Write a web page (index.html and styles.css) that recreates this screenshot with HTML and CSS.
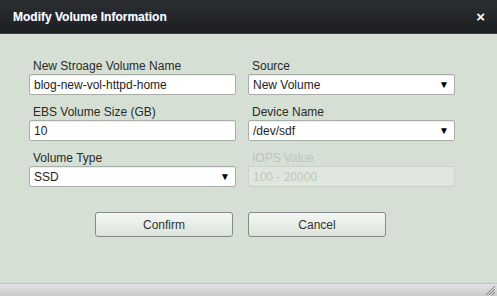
FILE: index.html
```html
<!DOCTYPE html>
<html>

<head>
  <title>Modify Volume Information</title>

  <link rel="stylesheet" href="styles.css">
</head>

<body>
  <div class="dialog">
    <div class="dialog-title">
      <h2>Modify Volume Information</h2>
      <span class="close-btn">&times;</span>
    </div>

    <div class="dialog-body">
      <div class="form-grid">
        <div class="field">
          <label for="volumeName">New Stroage Volume Name</label>
          <input type="text" id="volumeName" value="blog-new-vol-httpd-home" />
        </div>

        <div class="field">
          <label for="source">Source</label>
          <div class="select-box" id="source">
            <span>New Volume</span>
            <span class="arrow">&#9660;</span>
          </div>
        </div>

        <div class="field">
          <label for="volumeSize">EBS Volume Size (GB)</label>
          <input type="text" id="volumeSize" value="10" />
        </div>

        <div class="field">
          <label for="deviceName">Device Name</label>
          <div class="select-box" id="deviceName">
            <span>/dev/sdf</span>
            <span class="arrow">&#9660;</span>
          </div>
        </div>

        <div class="field">
          <label for="volumeType">Volume Type</label>
          <div class="select-box" id="volumeType">
            <span>SSD</span>
            <span class="arrow">&#9660;</span>
          </div>
        </div>

        <div class="field field--disabled">
          <label for="iops">IOPS Value</label>
          <input type="text" id="iops" placeholder="100 - 20000" disabled />
        </div>
      </div>

      <div class="button-row">
        <button class="btn">Confirm</button>
        <button class="btn">Cancel</button>
      </div>
    </div>

    <div class="dialog-footer">
      <!-- resize grip -->
      <svg class="grip" width="12" height="12" viewBox="0 0 12 12">
        <path d="M11 2 L2 11 M11 5 L5 11 M11 8 L8 11" stroke="#7a7a7a" stroke-width="1" fill="none" />
      </svg>
    </div>
  </div>
</body>

</html>
```

FILE: styles.css
```css
* {
  margin: 0;
  padding: 0;
  box-sizing: border-box;
}

body {
  font-family: 'Liberation Sans', Arial, sans-serif;
  font-size: 12px;
  color: #333;
  background-color: #d5dfd4;
}

.dialog {
  display: flex;
  flex-direction: column;
  width: 497px;
  height: 296px;
}

.dialog-title {
  display: flex;
  justify-content: space-between;
  align-items: center;
  height: 34px;
  padding: 0 13px;
  background: linear-gradient(#2b2e31, #1d1f21);
  border-bottom: 1px solid #3d4043;
  color: #fff;
}

.dialog-title h2 {
  font-size: 12px;
  font-weight: bold;
  text-shadow: 0 0 1px rgba(120, 160, 255, 0.5);
}

.close-btn {
  font-size: 15px;
  font-weight: bold;
  margin-right: -1px;
}

.dialog-body {
  flex: 1;
  padding: 25px 0 0 29px;
  background-color: #d5dfd4;
}

.form-grid {
  display: grid;
  grid-template-columns: 207px 207px;
  column-gap: 12px;
  row-gap: 10px;
}

.field label {
  display: block;
  height: 14px;
  line-height: 14px;
  padding-left: 4px;
  margin-bottom: 1px;
  color: #2a2a2a;
}

.field input,
.select-box {
  display: flex;
  align-items: center;
  width: 100%;
  height: 21px;
  padding: 0 4px;
  font-family: inherit;
  font-size: 12px;
  color: #1e1e1e;
  background-color: #fff;
  border: 1px solid #a9aea8;
  border-radius: 2px;
  box-shadow: inset 0 1px 1px rgba(0, 0, 0, 0.08);
}

.select-box {
  justify-content: space-between;
}

.select-box .arrow {
  font-size: 10px;
  margin-right: 1px;
  color: #000;
}

.field--disabled label {
  color: #bcc5bb;
}

.field--disabled input {
  background-color: #dfe6dd;
  border-color: #c9d1c8;
  box-shadow: none;
}

.field--disabled input::placeholder {
  color: #bfc6be;
}

.button-row {
  display: flex;
  gap: 15px;
  margin-top: 25px;
  padding-left: 66px;
}

.btn {
  width: 138px;
  height: 25px;
  font-family: inherit;
  font-size: 12px;
  color: #333;
  background: linear-gradient(#f4f7f3, #dce4da);
  border: 1px solid #85898a;
  border-radius: 3px;
  cursor: pointer;
}

.dialog-footer {
  position: relative;
  height: 13px;
  background: linear-gradient(#e4e4e6, #c9cacc);
  border-top: 1px solid #c2c4c2;
}

.grip {
  position: absolute;
  right: 1px;
  bottom: 0;
}
```
